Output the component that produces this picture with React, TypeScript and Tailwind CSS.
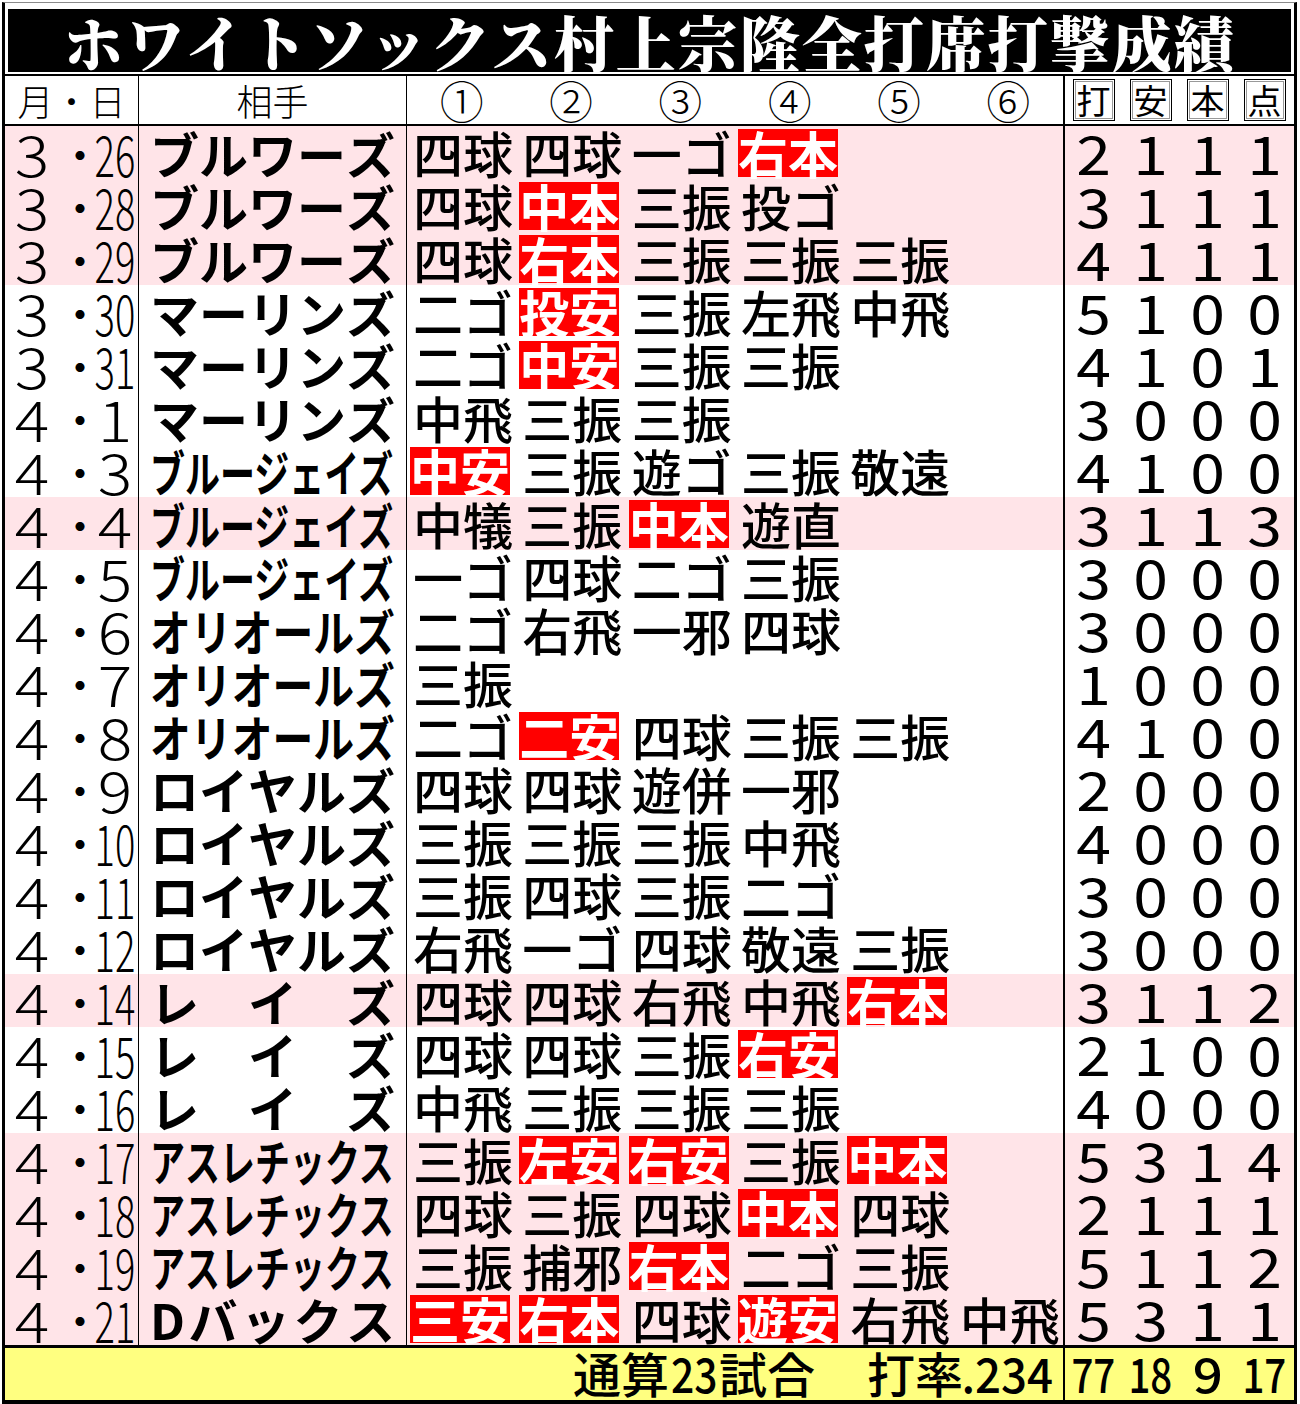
import React from "react";

type Row = { m: string; d: string; opp: string; ab: string[]; st: number[]; pink?: boolean };

// "*" = hit (red box)
const rows: Row[] = [
  { m: "3", d: "26", opp: "ブルワーズ", ab: ["四球", "四球", "一ゴ", "*右本"], st: [2, 1, 1, 1], pink: true },
  { m: "3", d: "28", opp: "ブルワーズ", ab: ["四球", "*中本", "三振", "投ゴ"], st: [3, 1, 1, 1], pink: true },
  { m: "3", d: "29", opp: "ブルワーズ", ab: ["四球", "*右本", "三振", "三振", "三振"], st: [4, 1, 1, 1], pink: true },
  { m: "3", d: "30", opp: "マーリンズ", ab: ["二ゴ", "*投安", "三振", "左飛", "中飛"], st: [5, 1, 0, 0] },
  { m: "3", d: "31", opp: "マーリンズ", ab: ["二ゴ", "*中安", "三振", "三振"], st: [4, 1, 0, 1] },
  { m: "4", d: "1", opp: "マーリンズ", ab: ["中飛", "三振", "三振"], st: [3, 0, 0, 0] },
  { m: "4", d: "3", opp: "ブルージェイズ", ab: ["*中安", "三振", "遊ゴ", "三振", "敬遠"], st: [4, 1, 0, 0] },
  { m: "4", d: "4", opp: "ブルージェイズ", ab: ["中犠", "三振", "*中本", "遊直"], st: [3, 1, 1, 3], pink: true },
  { m: "4", d: "5", opp: "ブルージェイズ", ab: ["一ゴ", "四球", "二ゴ", "三振"], st: [3, 0, 0, 0] },
  { m: "4", d: "6", opp: "オリオールズ", ab: ["二ゴ", "右飛", "一邪", "四球"], st: [3, 0, 0, 0] },
  { m: "4", d: "7", opp: "オリオールズ", ab: ["三振"], st: [1, 0, 0, 0] },
  { m: "4", d: "8", opp: "オリオールズ", ab: ["二ゴ", "*二安", "四球", "三振", "三振"], st: [4, 1, 0, 0] },
  { m: "4", d: "9", opp: "ロイヤルズ", ab: ["四球", "四球", "遊併", "一邪"], st: [2, 0, 0, 0] },
  { m: "4", d: "10", opp: "ロイヤルズ", ab: ["三振", "三振", "三振", "中飛"], st: [4, 0, 0, 0] },
  { m: "4", d: "11", opp: "ロイヤルズ", ab: ["三振", "四球", "三振", "二ゴ"], st: [3, 0, 0, 0] },
  { m: "4", d: "12", opp: "ロイヤルズ", ab: ["右飛", "一ゴ", "四球", "敬遠", "三振"], st: [3, 0, 0, 0] },
  { m: "4", d: "14", opp: "レイズ", ab: ["四球", "四球", "右飛", "中飛", "*右本"], st: [3, 1, 1, 2], pink: true },
  { m: "4", d: "15", opp: "レイズ", ab: ["四球", "四球", "三振", "*右安"], st: [2, 1, 0, 0] },
  { m: "4", d: "16", opp: "レイズ", ab: ["中飛", "三振", "三振", "三振"], st: [4, 0, 0, 0] },
  { m: "4", d: "17", opp: "アスレチックス", ab: ["三振", "*左安", "*右安", "三振", "*中本"], st: [5, 3, 1, 4], pink: true },
  { m: "4", d: "18", opp: "アスレチックス", ab: ["四球", "三振", "四球", "*中本", "四球"], st: [2, 1, 1, 1], pink: true },
  { m: "4", d: "19", opp: "アスレチックス", ab: ["三振", "捕邪", "*右本", "二ゴ", "三振"], st: [5, 1, 1, 2], pink: true },
  { m: "4", d: "21", opp: "Dバックス", ab: ["*三安", "*右本", "四球", "*遊安", "右飛", "中飛"], st: [5, 3, 1, 1], pink: true },
];

const jp = "font-['Noto_Sans_CJK_JP',sans-serif]";

function Opponent({ name }: { name: string }) {
  if (name.length >= 7) {
    return <span className="inline-block origin-left scale-x-[0.714] whitespace-nowrap">{name}</span>;
  }
  if (name.length === 6) {
    return <span className="inline-block origin-left scale-x-[0.833] whitespace-nowrap">{name}</span>;
  }
  return (
    <div className="flex w-[245px] justify-between">
      {name.split("").map((c, i) => (
        <span key={i}>{c}</span>
      ))}
    </div>
  );
}

function AtBat({ v }: { v?: string }) {
  if (!v) return <div className="w-[109.6px]" />;
  const hit = v.startsWith("*");
  return (
    <div className="flex w-[109.6px] items-center pl-[3px]">
      {hit ? (
        <span className="flex h-[48px] w-[100px] items-center justify-center bg-[#ff0000] font-bold text-white">
          {v.slice(1)}
        </span>
      ) : (
        <span className="pl-[3px] font-medium">{v}</span>
      )}
    </div>
  );
}

export default function App() {
  return (
    <div className={`h-[1404px] w-[1300px] bg-white pl-[2px] pt-[2px] text-black ${jp}`}>
      <div className="w-[1295px] border-x-[3px] border-b-[4px] border-t border-black border-t-[#8a8a8a]">
        {/* title */}
        <div className="px-[3px] pb-[2px] pt-[6px]">
          <div className="flex h-[63px] items-center justify-center bg-black font-['Noto_Serif_CJK_JP','Noto_Sans_CJK_JP',serif] text-[60px] font-black leading-none tracking-[2px] text-white">
            ホワイトソックス村上宗隆全打席打撃成績
          </div>
        </div>

        {/* header */}
        <div className="flex h-[52px] border-y-2 border-black">
          <div className="flex w-[134px] items-center justify-center border-r border-black text-[36px] font-light">
            月・日
          </div>
          <div className="flex w-[268px] items-center justify-center border-r border-black text-[36px] font-light">
            相手
          </div>
          <div className="flex w-[658px] items-center border-r-2 border-black">
            {["①", "②", "③", "④", "⑤", "⑥"].map((c) => (
              <div key={c} className="flex w-[109.6px] justify-center text-[44px] font-light leading-none">
                {c}
              </div>
            ))}
          </div>
          <div className="flex flex-1 items-center">
            {["打", "安", "本", "点"].map((c) => (
              <div key={c} className="flex w-[57px] justify-center">
                <span className="flex h-[42px] w-[42px] items-center justify-center border border-black text-[34px] leading-none outline outline-1 outline-offset-[-3px] outline-[#999]">
                  {c}
                </span>
              </div>
            ))}
          </div>
        </div>

        {/* rows */}
        {rows.map((r) => (
          <div key={r.m + r.d} className={`flex h-[53px] text-[50px] leading-[53px] ${r.pink ? "bg-[#ffe4e8]" : ""}`}>
            <div className="flex w-[134px] items-center border-r border-black pl-[7px] text-[56px] font-light">
              <span className="flex w-[40px] justify-center">
                <span className="inline-block scale-x-[1.15]">{r.m}</span>
              </span>
              <span className="ml-[16px] flex w-[24px] justify-center text-[48px]">・</span>
              <span className="flex w-[46px] justify-center">
                {r.d.length > 1 ? (
                  <span className="inline-block scale-x-[0.68]">{r.d}</span>
                ) : (
                  <span className="inline-block scale-x-[1.15]">{r.d}</span>
                )}
              </span>
            </div>
            <div className="flex w-[268px] items-center border-r border-black pl-[11px] text-[49px] font-bold">
              <Opponent name={r.opp} />
            </div>
            <div className="flex w-[658px] border-r-2 border-black">
              {[0, 1, 2, 3, 4, 5].map((i) => (
                <AtBat key={i} v={r.ab[i]} />
              ))}
            </div>
            <div className="flex flex-1 items-center text-[53px] font-normal">
              {r.st.map((n, i) => (
                <span key={i} className="inline-block w-[57px] scale-x-[1.18] text-center">
                  {n}
                </span>
              ))}
            </div>
          </div>
        ))}

        {/* footer */}
        <div className="flex h-[55px] border-t-[3px] border-black bg-[#ffff80] text-[48px] font-medium leading-none">
          <div className="flex w-[1060px] items-center justify-end border-r-2 border-black pb-[4px] pr-[12px]">
            <span>通算</span>
            <span className="flex w-[50px] justify-center">
              <span className="inline-block scale-x-[0.85]">23</span>
            </span>
            <span>試合</span>
            <span className="ml-[52px]">打率</span>
            <span className="flex w-[88px] justify-center">
              <span className="inline-block scale-x-[0.95]">.234</span>
            </span>
          </div>
          <div className="flex flex-1 items-center pb-[4px]">
            {[77, 18, 9, 17].map((n, i) => (
              <span key={i} className="flex w-[57px] justify-center">
                <span className={`inline-block ${n > 9 ? "scale-x-[0.8]" : "scale-x-[1.1]"}`}>{n}</span>
              </span>
            ))}
          </div>
        </div>
      </div>
    </div>
  );
}
